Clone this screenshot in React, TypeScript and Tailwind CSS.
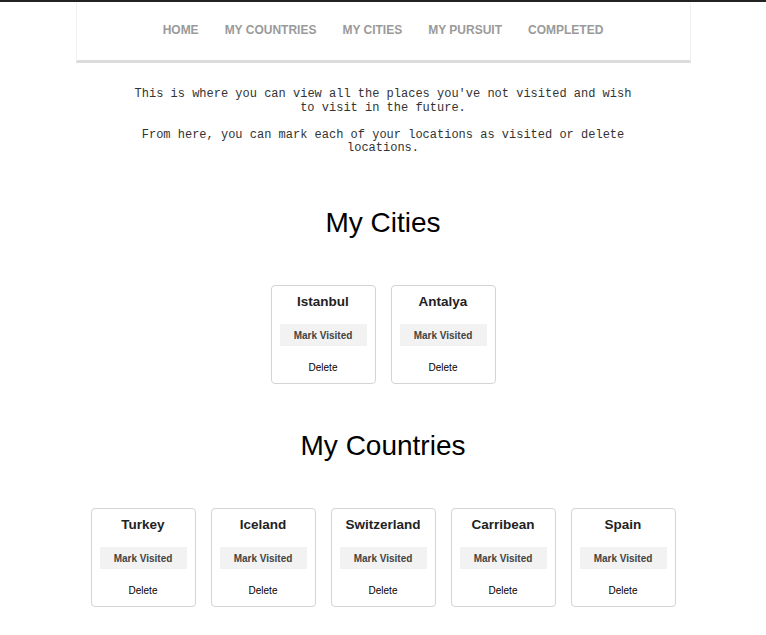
import React from "react";

const navLinks = ["Home", "My Countries", "My Cities", "My Pursuit", "Completed"];
const cities = ["Istanbul", "Antalya"];
const countries = ["Turkey", "Iceland", "Switzerland", "Carribean", "Spain"];

const PlaceCard: React.FC<{ name: string }> = ({ name }) => (
  <div className="w-[105px] h-[99px] p-2 bg-white rounded-[4px] border border-[#d4d4d4] flex flex-col items-center">
    <h3 className="h-4 leading-4 text-[13.5px] font-bold text-[#222]">{name}</h3>
    <button className="mt-[14px] w-full h-[27px] pt-px bg-[#f2f2f2] text-[10px] font-bold text-[#444]">
      Mark Visited
    </button>
    <button className="mt-[15px] h-[14px] leading-[14px] text-[10px] text-black">Delete</button>
  </div>
);

export default function App() {
  return (
    <div className="min-h-[635px] bg-white border-t-2 border-[#222] font-['Liberation_Sans',Arial,sans-serif]">
      <nav className="mx-auto w-[615px] h-[60px] mt-px border-x border-[#f0f0f0] border-b-[3px] border-b-[#dcdcdc] flex items-center justify-center gap-[26px] pb-[3px]">
        {navLinks.map((link) => (
          <a key={link} href="#" className="text-[12px] font-bold uppercase text-[#9a9a9a]">
            {link}
          </a>
        ))}
      </nav>

      <div className="mx-auto mt-[25px] w-[510px] text-center font-['Liberation_Mono','Courier_New',monospace] text-[12px] leading-[13.5px] text-[#333]">
        <p>This is where you can view all the places you've not visited and wish to visit in the future.</p>
        <p className="mt-[13.5px]">From here, you can mark each of your locations as visited or delete locations.</p>
      </div>

      <h2 className="mt-[51px] text-center text-[28px] leading-8 text-black">My Cities</h2>
      <div className="mt-[46px] flex justify-center gap-[15px]">
        {cities.map((c) => (
          <PlaceCard key={c} name={c} />
        ))}
      </div>

      <h2 className="mt-[46px] text-center text-[28px] leading-8 text-black">My Countries</h2>
      <div className="mt-[46px] flex justify-center gap-[15px]">
        {countries.map((c) => (
          <PlaceCard key={c} name={c} />
        ))}
      </div>
    </div>
  );
}
